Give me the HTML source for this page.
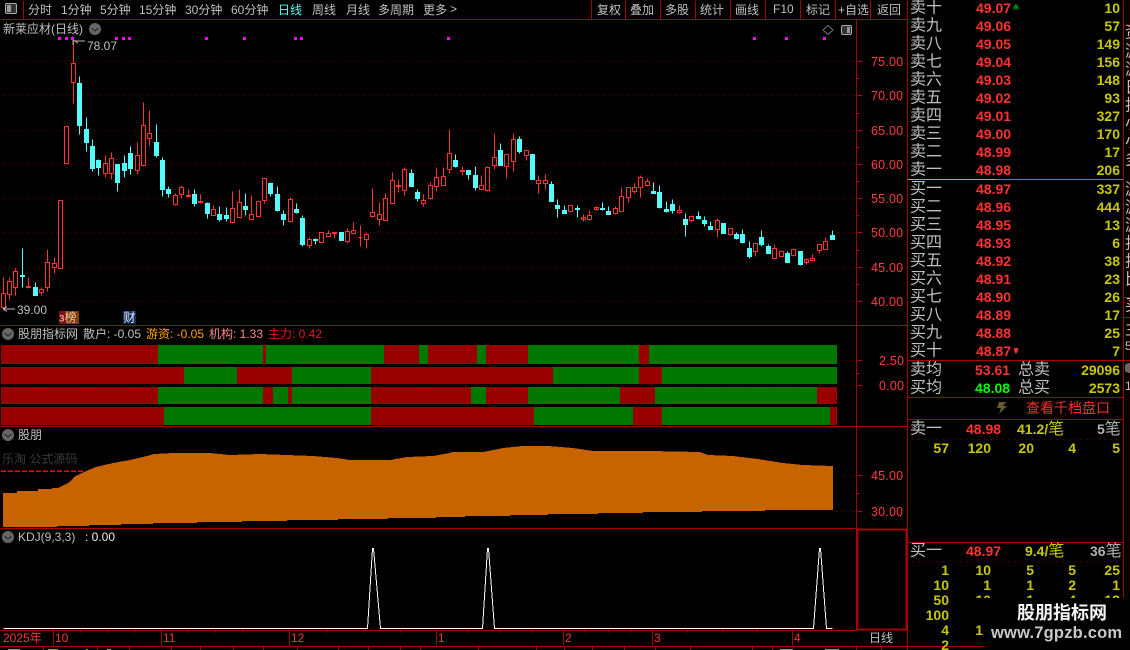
<!DOCTYPE html>
<html><head><meta charset="utf-8"><style>
html,body{margin:0;padding:0;background:#000;width:1130px;height:650px;overflow:hidden}
svg{display:block}
text{font-family:"Liberation Sans","WenQuanYi Zen Hei","Noto Sans CJK SC",sans-serif;dominant-baseline:central;white-space:pre}
.t{font-size:12px;fill:#c0c0c0}
.ax{font-size:12.5px;fill:#ff3c3c;letter-spacing:.2px}
.n{font-size:16px;fill:#c0c0c0}
.p{font-size:14px;font-weight:bold;fill:#ff3232}
.q{font-size:14px;font-weight:bold;fill:#c8c800;text-anchor:end}
.l{stroke:#aa0000;stroke-width:1;fill:none}
.d{stroke:#8a0000;stroke-width:1;stroke-dasharray:1 5;fill:none}
</style></head><body>
<svg width="1130" height="650" viewBox="0 0 1130 650" xmlns="http://www.w3.org/2000/svg">
<defs><clipPath id="rc"><rect x="1125" y="0" width="5" height="650"/></clipPath></defs>
<g shape-rendering="crispEdges" transform="translate(.5,.5)">
<!-- frame lines -->
<path class="l" d="M0 19H907M856 19V630M0 325H907M0 426H907M0 528H856M0 630H856M0 646H1130M907 0V650M1123 0V600M23 0V19M591 0V19M625 0V19M660 0V19M695 0V19M730 0V19M765 0V19M800 0V19M835 0V19M870 0V19M907 360H1123M907 397H1123M907 419H1123M907 542H1123M1123 25H1130M1123 297H1130M1123 317H1130M1123 360H1130"/>
<rect x="857" y="529" width="49" height="100" fill="none" stroke="#aa0000" stroke-width="2"/>
<!-- dotted -->
<path class="d" d="M3 61H856M3 95H856M3 130H856M3 164H856M3 198H856M3 232H856M3 267H856M3 301H856M3 385H856M838 360H856M3 475H856M835 511H856"/>
<path class="d" d="M912 439H1120M912 561H1120"/>
<!-- axis ticks -->
<path class="l" d="M856 61H862M856 95H862M856 130H862M856 164H862M856 198H862M856 232H862M856 267H862M856 301H862M856 78H859M856 113H859M856 147H859M856 181H859M856 215H859M856 250H859M856 284H859M856 360H862M856 385H862M856 373H859M856 475H862M856 511H862M856 493H859"/>
<!-- time axis ticks -->
<path class="l" d="M53 630V645M161 630V645M289 630V645M436 630V645M563 630V645M652 630V645M792 630V645M80 630V632M107 630V632M134 630V632M188 630V632M215 630V632M242 630V632M326 630V632M363 630V632M400 630V632M467 630V632M499 630V632M531 630V632M585 630V632M608 630V632M630 630V632M687 630V632M722 630V632M757 630V632M43 646V650M97 646V650M129 646V650M171 646V650M200 646V650M233 646V650M263 646V650M297 646V650M338 646V650M368 646V650M400 646V650M420 646V650M478 646V650M536 646V650M564 646V650M592 646V650M624 646V650M655 646V650M690 646V650M752 646V650M772 646V650M856 646V650M881 646V650"/>
<!-- red candles -->
<path fill="none" stroke="#ff3232" d="M3 277V293M3 307V308M1 293h4v14h-4zM9 277V281M9 294V299M7 281h4v13h-4zM15 268V271M15 287V295M13 271h4v16h-4zM28 277V288M26 286h4v1h-4zM41 287V289M41 292V295M39 289h4v3h-4zM47 249V262M47 287V291M45 262h4v25h-4zM54 257V263M54 267V273M52 263h4v4h-4zM60 268V269M58 200h4v68h-4zM64 126h4v37h-4zM73 40V63M73 82V103M71 63h4v19h-4zM105 155V163M105 173V177M103 163h4v10h-4zM111 152V158M111 173V179M109 158h4v15h-4zM137 142V155M137 170V174M135 155h4v15h-4zM143 102V125M143 165V166M141 125h4v40h-4zM149 110V133M149 138V145M147 133h4v5h-4zM175 193V195M175 204V205M173 195h4v9h-4zM181 185V187M181 194V198M179 187h4v7h-4zM188 189V197M186 195h4v1h-4zM200 194V203M198 201h4v1h-4zM213 205V209M211 209h4v6h-4zM232 191V208M232 222V223M230 208h4v14h-4zM239 189V202M237 202h4v15h-4zM251 195V214M249 214h4v5h-4zM258 216V217M256 201h4v15h-4zM264 200V203M262 178h4v22h-4zM290 197V199M290 221V222M288 199h4v22h-4zM309 237V239M309 245V248M307 239h4v6h-4zM319 232h4v10h-4zM328 230V233M326 233h4v3h-4zM334 233V238M332 232h4v1h-4zM347 228V231M347 241V243M345 231h4v10h-4zM353 222V230M353 233V234M351 230h4v3h-4zM360 225V246M358 237h4M366 232V234M366 239V248M364 234h4v5h-4zM372 188V212M372 216V217M370 212h4v4h-4zM379 202V214M379 219V225M377 214h4v5h-4zM385 193V198M383 198h4v22h-4zM392 172V180M390 180h4v23h-4zM398 179V192M396 185h4v1h-4zM404 167V169M404 190V195M402 169h4v21h-4zM423 194V200M423 203V206M421 200h4v3h-4zM430 182V185M430 198V199M428 185h4v13h-4zM436 167V177M436 186V191M434 177h4v9h-4zM443 167V176M441 176h4v9h-4zM449 129V153M449 169V173M447 153h4v16h-4zM462 166V175M460 170h4v1h-4zM481 175V185M479 185h4v4h-4zM487 166V167M487 190V191M485 167h4v23h-4zM494 133V157M494 165V169M492 157h4v8h-4zM506 166V178M504 154h4v12h-4zM513 133V139M513 161V171M511 139h4v22h-4zM526 149V150M526 155V160M524 150h4v5h-4zM538 175V180M538 183V193M536 180h4v3h-4zM545 174V180M545 183V189M543 180h4v3h-4zM568 205h4v6h-4zM583 214V221M581 217h4v2h-4zM589 210V215M589 219V220M587 215h4v4h-4zM596 206V210M594 207h4v2h-4zM615 206V208M615 213V214M613 208h4v5h-4zM621 187V196M619 196h4v15h-4zM628 197V202M626 187h4v10h-4zM634 183V187M634 191V193M632 187h4v4h-4zM640 175V177M640 187V197M638 177h4v10h-4zM647 178V181M647 185V186M645 181h4v4h-4zM679 205V210M679 212V213M677 210h4v2h-4zM691 215V216M691 220V222M689 216h4v4h-4zM717 218V220M717 229V237M715 220h4v9h-4zM730 234V235M728 228h4v6h-4zM755 251V256M753 243h4v8h-4zM774 244V248M772 248h4v10h-4zM781 250V251M779 251h4v5h-4zM793 248V249M793 255V256M791 249h4v6h-4zM806 258V264M804 259h4v3h-4zM812 254V258M810 258h4v2h-4zM819 250V253M817 244h4v6h-4zM825 237V241M823 241h4v8h-4z"/>
<!-- cyan candles -->
<path fill="#54fcfc" stroke="#54fcfc" d="M22 248V287M20 275h4v1h-4zM35 282V287M33 287h4v8h-4zM79 76V134M77 83h4v42h-4zM86 117V151M84 129h4v13h-4zM92 139V171M90 146h4v22h-4zM98 159V175M96 160h4v7h-4zM117 164V191M115 164h4v18h-4zM124 155V177M122 163h4v7h-4zM130 146V174M128 153h4v15h-4zM156 124V157M154 142h4v13h-4zM162 157V196M160 160h4v29h-4zM168 186V197M166 189h4v4h-4zM194 189V206M192 194h4v9h-4zM207 202V218M205 203h4v10h-4zM219 206V221M217 214h4v5h-4zM226 207V221M224 215h4v3h-4zM245 193V215M243 206h4v3h-4zM270 182V196M268 183h4v10h-4zM277 186V211M275 194h4v16h-4zM283 210V225M281 214h4v5h-4zM296 203V213M294 209h4v3h-4zM302 215V246M300 218h4v26h-4zM315 238V244M313 239h4v1h-4zM339 232h4v8h-4zM411 169V186M409 173h4v13h-4zM417 189V201M415 192h4v6h-4zM455 154V167M453 160h4v6h-4zM468 170V179M466 170h4v4h-4zM475 166V190M473 175h4v12h-4zM500 143V165M498 150h4v15h-4zM519 136V153M517 139h4v12h-4zM530 154h4v25h-4zM551 181V201M549 184h4v17h-4zM557 199V217M555 205h4v3h-4zM564 205V213M562 210h4v3h-4zM577 205V217M575 208h4v1h-4zM602 202V210M600 208h4v1h-4zM608 206V214M606 211h4v3h-4zM653 182V193M651 191h4v2h-4zM659 185V208M657 192h4v15h-4zM666 201V212M664 209h4v2h-4zM672 199V213M670 204h4v6h-4zM685 213V236M683 219h4v5h-4zM698 211V219M696 216h4v2h-4zM704 216V226M702 220h4v3h-4zM710 221V229M708 226h4v3h-4zM721 223h4v10h-4zM736 232V239M734 234h4v4h-4zM742 229V243M740 234h4v8h-4zM749 241V258M747 248h4v8h-4zM761 230V246M759 237h4v7h-4zM768 244V253M766 246h4v7h-4zM787 251V262M785 253h4v9h-4zM800 251V265M798 251h4v13h-4zM832 230V239M830 235h4v4h-4z"/>
<!-- KDJ line -->
<path fill="none" stroke="#fff" stroke-width="1" d="M3 628H367L372 548H373L380 628H482L487 548H488L494 628H813L819 548H820L826 628H832"/>
</g>
<g shape-rendering="crispEdges">
<!-- magenta markers -->
<g fill="#ff00ff"><rect x="58" y="37" width="3" height="3"/><rect x="65" y="37" width="3" height="3"/><rect x="71" y="37" width="3" height="3"/><rect x="115" y="37" width="3" height="3"/><rect x="122" y="37" width="3" height="3"/><rect x="128" y="37" width="3" height="3"/><rect x="205" y="37" width="3" height="3"/><rect x="243" y="37" width="3" height="3"/><rect x="294" y="37" width="3" height="3"/><rect x="300" y="37" width="3" height="3"/><rect x="447" y="37" width="3" height="3"/><rect x="753" y="37" width="3" height="3"/><rect x="785" y="37" width="3" height="3"/><rect x="823" y="37" width="3" height="3"/></g>
<!-- bars -->
<rect x="1" y="345" width="836" height="19" fill="#980000"/>
<g fill="#007800"><rect x="158" y="345" width="105" height="19"/><rect x="266" y="345" width="118" height="19"/><rect x="419" y="345" width="9" height="19"/><rect x="477" y="345" width="9" height="19"/><rect x="528" y="345" width="111" height="19"/><rect x="649" y="345" width="188" height="19"/></g>
<rect x="1" y="367" width="836" height="17" fill="#980000"/>
<g fill="#007800"><rect x="184" y="367" width="53" height="17"/><rect x="292" y="367" width="79" height="17"/><rect x="553" y="367" width="86" height="17"/><rect x="662" y="367" width="175" height="17"/></g>
<rect x="1" y="387" width="836" height="17" fill="#980000"/>
<g fill="#007800"><rect x="158" y="387" width="105" height="17"/><rect x="273" y="387" width="15" height="17"/><rect x="292" y="387" width="79" height="17"/><rect x="471" y="387" width="15" height="17"/><rect x="528" y="387" width="92" height="17"/><rect x="655" y="387" width="162" height="17"/></g>
<rect x="1" y="407" width="836" height="18" fill="#980000"/>
<g fill="#007800"><rect x="164" y="407" width="207" height="18"/><rect x="534" y="407" width="99" height="18"/><rect x="662" y="407" width="168" height="18"/></g>
<!-- orange area -->
<path fill="#c86400" d="M3 493H17V491H38V489H52V488H58L62 486L68 483L72 480L74 477L78 475L84 472L96 467L113 463L130 460L147 456L154 454L173 453H210L230 455L260 454L313 456L337 458L350 460H390L407 457L433 456L450 453L452 452H483L503 448L523 446H548L573 448L593 451H650L700 452L708 455L733 456L758 459L783 463L803 465L833 466V510H765V511H702V512H643V513H598V514H548V515H510V516H465V517H436V518H388V519H338V520H287V521H242V522H197V523H153V524H121V525H89V526H57V527H3Z"/>
<path stroke="#ff0000" stroke-width="1.5" stroke-dasharray="5 2" fill="none" d="M1 471H85"/>
<!-- bottom cut-off row -->
<g fill="#909090"><rect x="8" y="649" width="12" height="1"/><rect x="107" y="649" width="4" height="1"/><rect x="780" y="649" width="13" height="1"/><rect x="825" y="649" width="14" height="1"/></g>
<g fill="#a0a000"><rect x="48" y="649" width="10" height="1"/><rect x="86" y="649" width="2" height="1"/></g>
</g>
<!-- toolbar -->
<rect x="5.500" y="3.500" width="11" height="10" rx="1.500" fill="#333" stroke="#aaa"/><rect x="7" y="5" width="4" height="7" fill="#999"/>
<text class="t" x="28" y="10">分时</text><text class="t" x="61" y="10">1分钟</text><text class="t" x="100" y="10">5分钟</text><text class="t" x="139" y="10">15分钟</text><text class="t" x="185" y="10">30分钟</text><text class="t" x="231" y="10">60分钟</text><text class="t" x="278" y="10" style="fill:#54fcfc">日线</text><text class="t" x="312" y="10">周线</text><text class="t" x="346" y="10">月线</text><text class="t" x="378" y="10">多周期</text><text class="t" x="423" y="10">更多</text><text class="t" x="450" y="9">&gt;</text>
<text class="t" x="597" y="10">复权</text><text class="t" x="630" y="10">叠加</text><text class="t" x="665" y="10">多股</text><text class="t" x="700" y="10">统计</text><text class="t" x="735" y="10">画线</text><text class="t" x="773" y="9">F10</text><text class="t" x="806" y="10">标记</text><text class="t" x="838" y="10">+自选</text><text class="t" x="877" y="10">返回</text>
<text class="t" x="3" y="29">新莱应材(日线)</text>
<circle cx="95" cy="29" r="6" fill="#666"/><path d="M91.500 28l3.500 3 3.500-3" stroke="#222" fill="none"/>
<path d="M828 25.500l5 4.500-5 4.500-5-4.500z" fill="none" stroke="#777"/>
<rect x="841.500" y="25.500" width="10" height="9" rx="1.500" fill="#333" stroke="#aaa"/><rect x="847" y="27" width="3" height="6" fill="#999"/>
<!-- price annotations -->
<path d="M73 40l5 3m-5-3v5M75 41h10" stroke="#bbb" fill="none" stroke-width=".9"/><text class="t" x="87" y="46">78.07</text>
<path d="M3 309h12M3 309l4-2.500M3 309l4 2.500" stroke="#bbb" fill="none"/><text class="t" x="17" y="310">39.00</text>
<rect x="59" y="311" width="7" height="13" fill="#801010"/><rect x="66" y="311" width="13" height="13" fill="#804000"/><text class="t" x="59" y="317.500" style="font-size:12px;fill:#e8c8a8">з榜</text>
<rect x="123" y="311" width="13" height="13" fill="#103060"/><text class="t" x="123.500" y="317.500" style="font-size:12px;fill:#e8e8f0">财</text>
<!-- axis labels -->
<text class="ax" x="871" y="62">75.00</text><text class="ax" x="871" y="96">70.00</text><text class="ax" x="871" y="131">65.00</text><text class="ax" x="871" y="165">60.00</text><text class="ax" x="871" y="199">55.00</text><text class="ax" x="871" y="233">50.00</text><text class="ax" x="871" y="268">45.00</text><text class="ax" x="871" y="302">40.00</text>
<text class="ax" x="879" y="361">2.50</text><text class="ax" x="879" y="386">0.00</text><text class="ax" x="871" y="476">45.00</text><text class="ax" x="871" y="512">30.00</text>
<!-- indicator titles -->
<circle cx="8" cy="334" r="6" fill="#666"/><path d="M4.500 333l3.500 3 3.500-3" stroke="#222" fill="none"/>
<text class="t" x="18" y="334">股朋指标网</text><text class="t" x="83" y="334">散户: -0.05</text><text class="t" x="146" y="334" style="fill:#ffa500">游资: -0.05</text><text class="t" x="209" y="334" style="fill:#ff8888">机构: 1.33</text><text class="t" x="268" y="334" style="fill:#e81818">主力: 0.42</text>
<circle cx="8" cy="435" r="6" fill="#666"/><path d="M4.500 434l3.500 3 3.500-3" stroke="#222" fill="none"/>
<text class="t" x="18" y="435">股朋</text>
<text class="t" x="2" y="459" style="fill:#3a3a3a">乐淘 公式源码</text>
<circle cx="8" cy="537" r="6" fill="#666"/><path d="M4.500 536l3.500 3 3.500-3" stroke="#222" fill="none"/>
<text class="t" x="18" y="537">KDJ(9,3,3)</text><text class="t" x="85" y="537" style="fill:#eee">: 0.00</text>
<!-- time axis -->
<text class="t" x="3" y="638" style="fill:#ff3232">2025年</text><text class="t" x="55" y="638" style="fill:#ff3232">10</text><text class="t" x="163" y="638" style="fill:#ff3232">11</text><text class="t" x="291" y="638" style="fill:#ff3232">12</text><text class="t" x="438" y="638" style="fill:#ff3232">1</text><text class="t" x="565" y="638" style="fill:#ff3232">2</text><text class="t" x="654" y="638" style="fill:#ff3232">3</text><text class="t" x="794" y="638" style="fill:#ff3232">4</text>
<text class="t" x="869" y="638">日线</text>
<!-- order book divider -->
<rect x="908" y="179" width="88" height="1" fill="#e0a040" shape-rendering="crispEdges"/><rect x="996" y="179" width="127" height="1" fill="#4a88c8" shape-rendering="crispEdges"/>
<!-- order book -->
<text class="n" x="910" y="8">卖十</text><text class="p" x="976" y="8">49.07</text><text class="q" x="1120" y="8">10</text>
<text class="n" x="910" y="26">卖九</text><text class="p" x="976" y="26">49.06</text><text class="q" x="1120" y="26">57</text>
<text class="n" x="910" y="44">卖八</text><text class="p" x="976" y="44">49.05</text><text class="q" x="1120" y="44">149</text>
<text class="n" x="910" y="62">卖七</text><text class="p" x="976" y="62">49.04</text><text class="q" x="1120" y="62">156</text>
<text class="n" x="910" y="80">卖六</text><text class="p" x="976" y="80">49.03</text><text class="q" x="1120" y="80">148</text>
<text class="n" x="910" y="98">卖五</text><text class="p" x="976" y="98">49.02</text><text class="q" x="1120" y="98">93</text>
<text class="n" x="910" y="116">卖四</text><text class="p" x="976" y="116">49.01</text><text class="q" x="1120" y="116">327</text>
<text class="n" x="910" y="134">卖三</text><text class="p" x="976" y="134">49.00</text><text class="q" x="1120" y="134">170</text>
<text class="n" x="910" y="152">卖二</text><text class="p" x="976" y="152">48.99</text><text class="q" x="1120" y="152">17</text>
<text class="n" x="910" y="170">卖一</text><text class="p" x="976" y="170">48.98</text><text class="q" x="1120" y="170">206</text>
<text class="n" x="910" y="189">买一</text><text class="p" x="976" y="189">48.97</text><text class="q" x="1120" y="189">337</text>
<text class="n" x="910" y="207">买二</text><text class="p" x="976" y="207">48.96</text><text class="q" x="1120" y="207">444</text>
<text class="n" x="910" y="225">买三</text><text class="p" x="976" y="225">48.95</text><text class="q" x="1120" y="225">13</text>
<text class="n" x="910" y="243">买四</text><text class="p" x="976" y="243">48.93</text><text class="q" x="1120" y="243">6</text>
<text class="n" x="910" y="261">买五</text><text class="p" x="976" y="261">48.92</text><text class="q" x="1120" y="261">38</text>
<text class="n" x="910" y="279">买六</text><text class="p" x="976" y="279">48.91</text><text class="q" x="1120" y="279">23</text>
<text class="n" x="910" y="297">买七</text><text class="p" x="976" y="297">48.90</text><text class="q" x="1120" y="297">26</text>
<text class="n" x="910" y="315">买八</text><text class="p" x="976" y="315">48.89</text><text class="q" x="1120" y="315">17</text>
<text class="n" x="910" y="333">买九</text><text class="p" x="976" y="333">48.88</text><text class="q" x="1120" y="333">25</text>
<text class="n" x="910" y="351">买十</text><text class="p" x="976" y="351">48.87</text><text class="q" x="1120" y="351">7</text>
<path d="M1016 4l2.500 2.500h-1l1.500 2h-6l1.500-2h-1zM1013 9.500h6" fill="#008000" stroke="#008000" stroke-width=".5"/>
<path d="M1013 348h6l-2 2h1.500l-2.500 4-2.500-4h1.500z" fill="#ff3232"/>
<text class="n" x="910" y="370">卖均</text><text class="p" x="975" y="370">53.61</text><text class="n" x="1018" y="370">总卖</text><text class="q" x="1120" y="370">29096</text>
<text class="n" x="910" y="388">买均</text><text class="p" x="975" y="388" style="fill:#00ff00">48.08</text><text class="n" x="1018" y="388">总买</text><text class="q" x="1120" y="388">2573</text>
<path d="M999 402h7l-3 4h4l-8 8 2-6h-4z" fill="#6b5a30"/>
<text x="1026" y="408" style="font-size:14px;fill:#ff2a2a">查看千档盘口</text>
<text class="n" x="910" y="429">卖一</text><text class="p" x="966" y="429">48.98</text><text class="q" x="1017" y="429" style="text-anchor:start">41.2/<tspan style="font-weight:normal;font-size:16px">笔</tspan></text><text class="q" x="1097" y="429" style="text-anchor:start;fill:#b0b0b0">5<tspan style="font-weight:normal;font-size:16px">笔</tspan></text>
<text class="q" x="949" y="448">57</text><text class="q" x="991" y="448">120</text><text class="q" x="1034" y="448">20</text><text class="q" x="1076" y="448">4</text><text class="q" x="1120" y="448">5</text>
<text class="n" x="910" y="551">买一</text><text class="p" x="966" y="551">48.97</text><text class="q" x="1025" y="551" style="text-anchor:start">9.4/<tspan style="font-weight:normal;font-size:16px">笔</tspan></text><text class="q" x="1090" y="551" style="text-anchor:start;fill:#b0b0b0">36<tspan style="font-weight:normal;font-size:16px">笔</tspan></text>
<text class="q" x="949" y="570">1</text><text class="q" x="991" y="570">10</text><text class="q" x="1034" y="570">5</text><text class="q" x="1076" y="570">5</text><text class="q" x="1120" y="570">25</text>
<text class="q" x="949" y="585">10</text><text class="q" x="991" y="585">1</text><text class="q" x="1034" y="585">1</text><text class="q" x="1076" y="585">2</text><text class="q" x="1120" y="585">1</text>
<text class="q" x="949" y="600">50</text><text class="q" x="991" y="600">10</text><text class="q" x="1034" y="600">1</text><text class="q" x="1076" y="600">4</text><text class="q" x="1120" y="600">13</text>
<text class="q" x="949" y="615">100</text><text class="q" x="949" y="630">4</text><text class="q" x="983" y="630">1</text><text class="q" x="949" y="645">2</text>
<!-- right sliver -->
<g clip-path="url(#rc)" fill="#c0c0c0"><text class="n" x="1125" y="33">资</text><text class="n" x="1125" y="52">游</text><text class="n" x="1125" y="70">游</text><text class="n" x="1125" y="88">日</text><text class="n" x="1125" y="106">投</text><text class="n" x="1125" y="124">小</text><text class="n" x="1125" y="142">小</text><text class="n" x="1125" y="160">多</text><text class="n" x="1125" y="190">游</text><text class="n" x="1125" y="208">游</text><text class="n" x="1125" y="226">游</text><text class="n" x="1125" y="244">投</text><text class="n" x="1125" y="262">投</text><text class="n" x="1125" y="280">比</text><text class="n" x="1125" y="306">买</text><text class="n" x="1125" y="330">主</text><text class="t" x="1125" y="346">5</text><text class="t" x="1125" y="386">1</text><circle cx="1129" cy="368" r="5" fill="#666"/></g>
<!-- watermark -->
<path fill="#000" d="M975 598H1130V650H984V612H975z"/>
<text x="1017" y="613" style="font-size:18px;font-weight:bold;fill:#f4f4f4">股朋指标网</text>
<text x="991" y="633" style="font-size:16.500px;font-weight:bold;fill:#c8c8c8;letter-spacing:.2px">www.7gpzb.com</text>
</svg>
</body></html>
